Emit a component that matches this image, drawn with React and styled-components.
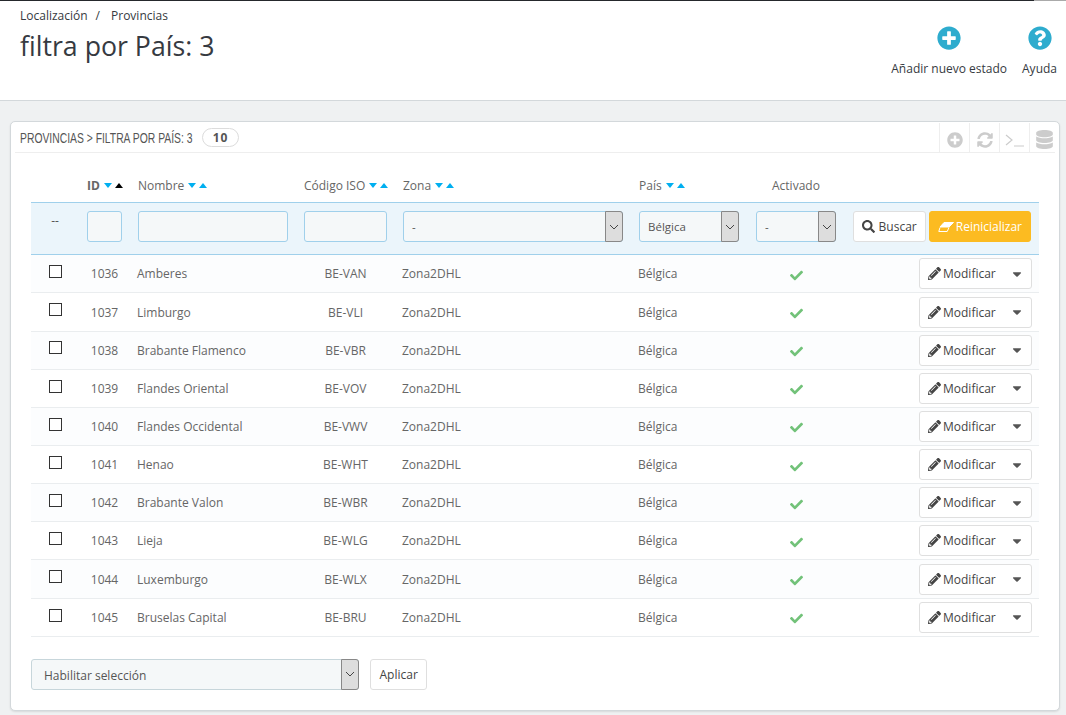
import React from "react";
import styled, { createGlobalStyle } from "styled-components";
import {
  FaPlusCircle,
  FaQuestionCircle,
  FaSyncAlt,
  FaDatabase,
  FaSearch,
  FaPencilAlt,
  FaCheck,
  FaCaretDown,
} from "react-icons/fa";

const GlobalStyle = createGlobalStyle`
  html, body {
    margin: 0;
    padding: 0;
    background: #eff1f2;
    font-family: "Open Sans", "Liberation Sans", sans-serif;
    font-size: 12px;
    color: #555;
  }
  * { box-sizing: border-box; }
`;

const COLUMNS = "56px 51px 166px 99px 236px 117px 97px 186px";

const Page = styled.div`
  width: 1066px;
  height: 715px;
  overflow: hidden;
`;

const TopLine = styled.div`
  height: 1px;
  background: linear-gradient(to right, #25282c 1034px, #aaa 1034px);
`;

const Header = styled.header`
  height: 100px;
  background: #fff;
  border-bottom: 1px solid #d3d8db;
  padding: 8px 9px 0 20px;
  display: flex;
  justify-content: space-between;
`;

const Breadcrumb = styled.div`
  display: flex;
  gap: 8px;
  font-size: 12px;
  line-height: 14px;
  color: #363a41;
  span:nth-child(2) { margin-right: 3px; }
`;

const Title = styled.h1`
  margin: 5px 0 0;
  font-size: 26.7px;
  line-height: 36px;
  font-weight: 400;
  color: #363a41;
`;

const HeaderActions = styled.div`
  display: flex;
  gap: 15px;
  padding-top: 17px;
`;

const HeaderAction = styled.a`
  display: flex;
  flex-direction: column;
  align-items: center;
  font-size: 12px;
  line-height: 16px;
  color: #363a41;
  svg {
    width: 24px;
    height: 24px;
    color: #2eacce;
    margin-bottom: 11px;
  }
`;

const Panel = styled.section`
  margin: 20px 6px 0 10px;
  height: 590px;
  background: #fff;
  border: 1px solid #d3d8db;
  border-radius: 5px;
  box-shadow: 0 1px 2px rgba(0, 0, 0, 0.1);
  padding: 0 4px;
`;

const PanelHead = styled.div`
  height: 31px;
  display: flex;
  align-items: center;
  border-bottom: 1px solid #eee;
  padding: 1px 0 0 5px;
`;

/* no condensed family is installed, so the title is squeezed to the reference width */
const PanelTitle = styled.span`
  display: block;
  width: 173px;
  white-space: nowrap;
  font-family: "Liberation Sans", sans-serif;
  font-size: 15px;
  color: #555;
  transform: scaleX(0.69);
  transform-origin: left center;
`;

const Badge = styled.span`
  margin-left: 9px;
  width: 37px;
  height: 19px;
  border: 1px solid #dcdcdc;
  border-radius: 10px;
  display: flex;
  align-items: center;
  justify-content: center;
  font-family: "Open Sans", sans-serif;
  font-weight: 700;
  font-size: 12px;
  letter-spacing: 1px;
  color: #555;
`;

const Tools = styled.div`
  margin: 0 -4px 0 auto;
  display: flex;
  height: 100%;
`;

const Tool = styled.span`
  width: 30px;
  display: flex;
  align-items: center;
  justify-content: center;
  padding-top: 4px;
  border-left: 1px solid #eee;
  color: #ccc;
  svg { width: ${(p) => p.$size || 16}px; height: ${(p) => p.$size || 16}px; }
`;

const Terminal = styled.svg`
  fill: none;
  stroke: #ccc;
  stroke-width: 1.2;
`;

const TableBox = styled.div`
  margin: 17px 16px 0 16px;
`;

const HeadRow = styled.div`
  display: grid;
  grid-template-columns: ${COLUMNS};
  height: 32px;
  align-items: center;
  padding-bottom: 2px;
`;

const HeadCell = styled.div`
  display: flex;
  align-items: center;
  gap: 3px;
  font-size: 12px;
  font-weight: ${(p) => (p.$bold ? 700 : 400)};
  color: #666;
  padding-left: ${(p) => p.$indent || 0}px;
`;

const Arrow = styled.i`
  width: 0;
  height: 0;
  margin-left: ${(p) => (p.$first ? 1 : 0)}px;
  border-left: 4.5px solid transparent;
  border-right: 4.5px solid transparent;
  border-${(p) => (p.$up ? "bottom" : "top")}: 5px solid ${(p) => p.$color || "#00aff0"};
`;

const FilterRow = styled.div`
  display: grid;
  grid-template-columns: ${COLUMNS};
  height: 53.2px;
  padding-bottom: 4px;
  align-items: center;
  background: #ebf5fb;
  border-top: 1px solid #a0d0eb;
  border-bottom: 1px solid #a0d0eb;
`;

const Dash = styled.div`
  text-align: center;
  padding-right: 8px;
  padding-bottom: 12px;
  color: #555;
`;

const Input = styled.input`
  display: block;
  width: ${(p) => p.$w}px;
  height: 31px;
  background: #f5f8f9;
  border: 1px solid #a0d0eb;
  border-radius: 3px;
`;

const SelectBox = styled.div`
  position: relative;
  width: ${(p) => p.$w}px;
  height: 31px;
`;

const Select = styled.select`
  appearance: none;
  width: 100%;
  height: 100%;
  background: #f5f8f9;
  border: 1px solid ${(p) => p.$border || "#a0d0eb"};
  border-radius: 3px;
  padding: ${(p) => p.$top || 0}px 0 0 ${(p) => p.$pad || 8}px;
  font-family: inherit;
  font-size: ${(p) => p.$font || 11.5}px;
  color: #555;
`;

const SelectArrow = styled.span`
  position: absolute;
  top: 0;
  right: 0;
  bottom: 0;
  width: 18px;
  background: #ddd;
  border: 1px solid #888;
  border-radius: 0 3px 3px 0;
  display: flex;
  align-items: center;
  justify-content: center;
  svg { width: 10px; height: 6px; fill: none; stroke: #444; stroke-width: 1; }
`;

const Actions = styled.div`
  display: flex;
  justify-content: flex-end;
  gap: 3px;
  padding-right: 8px;
`;

const Button = styled.button`
  height: 31px;
  display: flex;
  align-items: center;
  gap: 4px;
  padding: 0 ${(p) => p.$pad || 8.5}px;
  background: #fff;
  border: 1px solid #dfdfdf;
  border-radius: 3px;
  font-family: inherit;
  font-size: 12px;
  white-space: nowrap;
  color: #444;
  svg { width: 13px; height: 13px; color: #444; }
`;

const ResetButton = styled(Button)`
  gap: 2px;
  padding: 0 8px;
  background: #fcbb21;
  border-color: #fcbb21;
  color: #fff;
`;

const EraserIcon = styled.svg`
  && { width: 16px; height: 10px; }
  fill: #fff;
  stroke: #fff;
  stroke-width: 1;
`;

const Row = styled.div`
  display: grid;
  grid-template-columns: ${COLUMNS};
  height: 38.17px;
  padding-top: 0.2px;
  align-items: center;
  background: ${(p) => (p.$odd ? "#fcfdfe" : "#fff")};
  border-bottom: 1px solid #eaedef;
  font-size: 12px;
  color: #666;
`;

const CheckCell = styled.div`
  padding: 0 0 4.5px 18px;
`;

const CheckBox = styled.span`
  display: block;
  width: 13px;
  height: 13px;
  background: #fff;
  border: 1px solid #333;
`;

const IdCell = styled.div`
  width: 35px;
  text-align: center;
`;

const NameCell = styled.div`
  margin-left: -1px;
`;

const CodeCell = styled.div`
  width: 83px;
  text-align: center;
`;

const ZoneCell = styled.div`
  margin-left: -1px;
`;

const CountryCell = styled.div`
  margin-left: -1px;
`;

const ActiveCell = styled.div`
  width: 80px;
  display: flex;
  justify-content: center;
  svg { width: 13px; height: 13px; color: #72c279; margin-top: 3px; }
`;

const EditButton = styled(Button)`
  width: 113px;
  justify-content: flex-start;
  gap: 2px;
  padding: 0 8px;
  svg.caret { width: 14px; height: 14px; color: #555; margin-left: auto; margin-right: -1px; }
`;

const RowActions = styled.div`
  display: flex;
  justify-content: flex-end;
  padding-right: 7px;
`;

const BulkRow = styled.div`
  display: flex;
  gap: 11px;
  margin-top: 22px;
`;

const rows = [
  [1036, "Amberes", "BE-VAN"],
  [1037, "Limburgo", "BE-VLI"],
  [1038, "Brabante Flamenco", "BE-VBR"],
  [1039, "Flandes Oriental", "BE-VOV"],
  [1040, "Flandes Occidental", "BE-VWV"],
  [1041, "Henao", "BE-WHT"],
  [1042, "Brabante Valon", "BE-WBR"],
  [1043, "Lieja", "BE-WLG"],
  [1044, "Luxemburgo", "BE-WLX"],
  [1045, "Bruselas Capital", "BE-BRU"],
];

function Sort({ active }) {
  return (
    <>
      <Arrow $first />
      <Arrow $up $color={active ? "#000" : undefined} />
    </>
  );
}

function Dropdown({ width, value, border, pad, font, top }) {
  return (
    <SelectBox $w={width}>
      <Select $border={border} $pad={pad} $font={font} $top={top} defaultValue={value}>
        <option>{value}</option>
      </Select>
      <SelectArrow>
        <svg viewBox="0 0 10 6">
          <path d="M1 1l4 4 4-4" />
        </svg>
      </SelectArrow>
    </SelectBox>
  );
}

export default function App() {
  return (
    <Page>
      <GlobalStyle />
      <TopLine />
      <Header>
        <div>
          <Breadcrumb>
            <span>Localización</span>
            <span>/</span>
            <span>Provincias</span>
          </Breadcrumb>
          <Title>filtra por País: 3</Title>
        </div>
        <HeaderActions>
          <HeaderAction>
            <FaPlusCircle />
            Añadir nuevo estado
          </HeaderAction>
          <HeaderAction>
            <FaQuestionCircle />
            Ayuda
          </HeaderAction>
        </HeaderActions>
      </Header>

      <Panel>
        <PanelHead>
          <PanelTitle>PROVINCIAS &gt; FILTRA POR PAÍS: 3</PanelTitle>
          <Badge>10</Badge>
          <Tools>
            <Tool><FaPlusCircle /></Tool>
            <Tool><FaSyncAlt /></Tool>
            <Tool $size={20}>
              <Terminal viewBox="0 0 20 20">
                <path d="M1 5l6 5-6 5M9 16h10" />
              </Terminal>
            </Tool>
            <Tool $size={19}><FaDatabase /></Tool>
          </Tools>
        </PanelHead>

        <TableBox>
          <HeadRow>
            <div />
            <HeadCell $bold>ID<Sort active /></HeadCell>
            <HeadCell>Nombre<Sort /></HeadCell>
            <HeadCell>Código ISO<Sort /></HeadCell>
            <HeadCell>Zona<Sort /></HeadCell>
            <HeadCell>País<Sort /></HeadCell>
            <HeadCell $indent={16}>Activado</HeadCell>
            <div />
          </HeadRow>

          <FilterRow>
            <Dash>--</Dash>
            <Input $w={35} />
            <Input $w={150} />
            <Input $w={83} />
            <Dropdown width={220} value="-" />
            <Dropdown width={100} value="Bélgica" />
            <Dropdown width={80} value="-" />
            <Actions>
              <Button $pad={8}><FaSearch />Buscar</Button>
              <ResetButton>
                <EraserIcon viewBox="0 0 16 10">
                  <path d="M6 0.5h9.5L11 5H2z" />
                  <path d="M2 5.5L0.8 9.5h8.4L11 5.5" fill="none" />
                </EraserIcon>
                Reinicializar
              </ResetButton>
            </Actions>
          </FilterRow>

          {rows.map(([id, name, code], i) => (
            <Row key={id} $odd={i % 2 === 0}>
              <CheckCell><CheckBox /></CheckCell>
              <IdCell>{id}</IdCell>
              <NameCell>{name}</NameCell>
              <CodeCell>{code}</CodeCell>
              <ZoneCell>Zona2DHL</ZoneCell>
              <CountryCell>Bélgica</CountryCell>
              <ActiveCell><FaCheck /></ActiveCell>
              <RowActions>
                <EditButton>
                  <FaPencilAlt />
                  Modificar
                  <FaCaretDown className="caret" />
                </EditButton>
              </RowActions>
            </Row>
          ))}

          <BulkRow>
            <Dropdown width={328} value="Habilitar selección" border="#c7d6db" pad={12} font={12} top={2} />
            <Button>Aplicar</Button>
          </BulkRow>
        </TableBox>
      </Panel>
    </Page>
  );
}
